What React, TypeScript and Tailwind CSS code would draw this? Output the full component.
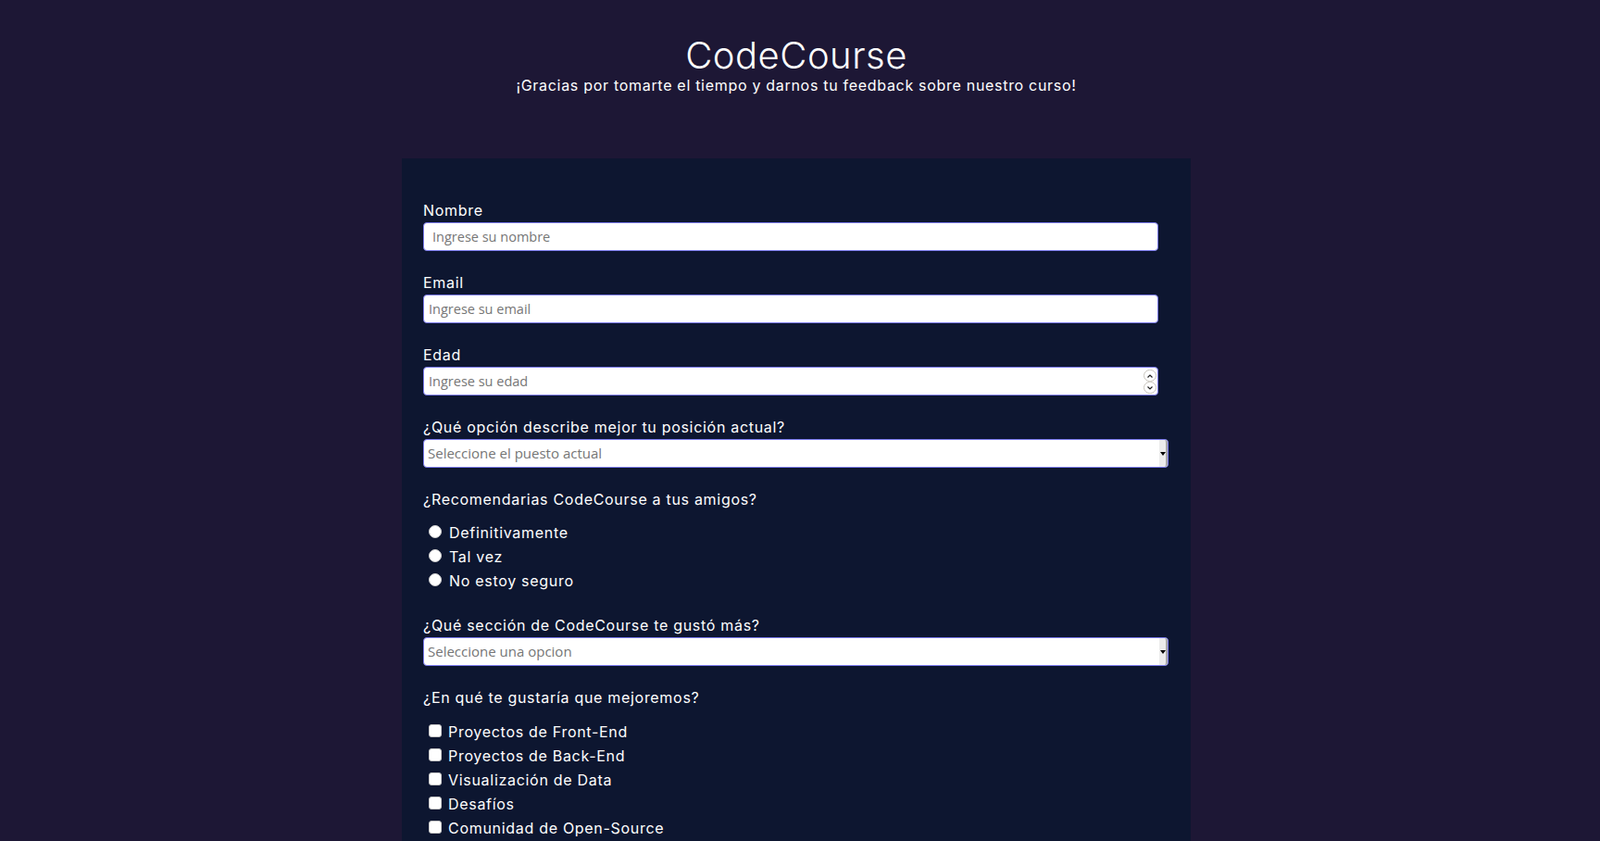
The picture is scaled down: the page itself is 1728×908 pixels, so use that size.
import { useState } from "react";

const font = { fontFamily: "Inter, 'Noto Sans', sans-serif" };

function SelectBox({ placeholder, options }: { placeholder: string; options: string[] }) {
  return (
    <div className="relative w-[805px] mt-[1px]">
      <select
        defaultValue=""
        className="block w-full h-[31px] appearance-none rounded-[4px] border border-[#7b7bee] bg-white pl-[4px] text-[15px] tracking-normal text-[#767676] outline-none"
        style={{ fontFamily: "'Open Sans', sans-serif" }}
      >
        <option value="" disabled>
          {placeholder}
        </option>
        {options.map((o) => (
          <option key={o}>{o}</option>
        ))}
      </select>
      {/* flecha del select */}
      <div className="pointer-events-none absolute right-[1px] top-[1px] bottom-[1px] w-[9px] rounded-r-[3px] border-r-2 border-[#a9a9a9] bg-[#ececec] flex items-center justify-center">
        <div className="w-0 h-0 border-l-[3px] border-r-[3px] border-t-[4px] border-l-transparent border-r-transparent border-t-black" />
      </div>
    </div>
  );
}

export default function App() {
  const [nombre, setNombre] = useState("");
  const [email, setEmail] = useState("");
  const [edad, setEdad] = useState("");

  const labelCls = "block text-[16px] leading-6 text-white";
  const inputCls =
    "block w-[794px] h-[31px] mt-[1px] rounded-[4px] border border-[#7b7bee] bg-white text-[14.5px] tracking-normal text-gray-800 placeholder:text-[#767676] outline-none";

  return (
    <div className="min-h-screen bg-[#1d1735] pb-10 pr-2" style={font}>
      <header className="pt-[38px] text-center text-white">
        <h1 className="text-[40px] leading-[44px] font-light tracking-[0.5px]">CodeCourse</h1>
        <p className="text-[16px] leading-5 tracking-[0.7px]">
          ¡Gracias por tomarte el tiempo y darnos tu feedback sobre nuestro curso!
        </p>
      </header>

      <div className="flex justify-center mt-[69px]">
        <form className="w-[852px] bg-[#0d1630] pt-[44px] pl-[23px] pb-12 tracking-[0.7px]">
          {/* Nombre */}
          <div className="mb-[22px]">
            <label className={labelCls}>Nombre</label>
            <input
              type="text"
              placeholder="Ingrese su nombre"
              value={nombre}
              onChange={(e) => setNombre(e.target.value)}
              className={inputCls + " pl-[9px]"}
              style={{ fontFamily: "'Open Sans', sans-serif" }}
            />
          </div>

          {/* Email */}
          <div className="mb-[22px]">
            <label className={labelCls}>Email</label>
            <input
              type="email"
              placeholder="Ingrese su email"
              value={email}
              onChange={(e) => setEmail(e.target.value)}
              className={inputCls + " pl-[5px]"}
              style={{ fontFamily: "'Open Sans', sans-serif" }}
            />
          </div>

          {/* Edad */}
          <div className="mb-[22px]">
            <label className={labelCls}>Edad</label>
            <div className="relative w-[794px]">
              <input
                type="number"
                placeholder="Ingrese su edad"
                value={edad}
                onChange={(e) => setEdad(e.target.value)}
                className={
                  inputCls +
                  " pl-[5px] [appearance:textfield] [&::-webkit-inner-spin-button]:appearance-none [&::-webkit-outer-spin-button]:appearance-none"
                }
                style={{ fontFamily: "'Open Sans', sans-serif" }}
              />
              <div className="pointer-events-none absolute right-[2px] top-[3px] flex flex-col">
                <div className="w-[14px] h-[13px] rounded-full border border-[#c8c4bc] bg-white flex items-center justify-center">
                  <svg width="6" height="4" viewBox="0 0 6 4">
                    <path d="M0.5 3.5 L3 1 L5.5 3.5" fill="none" stroke="#222" strokeWidth="1.2" />
                  </svg>
                </div>
                <div className="w-[14px] h-[13px] rounded-full border border-[#c8c4bc] bg-white flex items-center justify-center">
                  <svg width="6" height="4" viewBox="0 0 6 4">
                    <path d="M0.5 0.5 L3 3 L5.5 0.5" fill="none" stroke="#222" strokeWidth="1.2" />
                  </svg>
                </div>
              </div>
            </div>
          </div>

          {/* Posición */}
          <div className="mb-[22px]">
            <label className={labelCls}>¿Qué opción describe mejor tu posición actual?</label>
            <SelectBox
              placeholder="Seleccione el puesto actual"
              options={["Estudiante", "Trabajo a tiempo completo", "Busco trabajo", "Otro"]}
            />
          </div>

          {/* Recomendación */}
          <div className="mb-[23px]">
            <label className={labelCls}>¿Recomendarias CodeCourse a tus amigos?</label>
            <div className="mt-[11px] pl-[6px]">
              {["Definitivamente", "Tal vez", "No estoy seguro"].map((r) => (
                <label key={r} className="flex items-center h-[26px] text-[16px] text-white">
                  <input
                    type="radio"
                    name="recomendar"
                    className="appearance-none w-[14px] h-[14px] rounded-full bg-white border border-[#d0d0d0] -mt-[2px] mr-[8px]"
                  />
                  {r}
                </label>
              ))}
            </div>
          </div>

          {/* Sección */}
          <div className="mb-[22px]">
            <label className={labelCls}>¿Qué sección de CodeCourse te gustó más?</label>
            <SelectBox
              placeholder="Seleccione una opcion"
              options={["Desafíos", "Proyectos", "Comunidad", "Open-Source"]}
            />
          </div>

          {/* Mejoras */}
          <div className="mb-[23px]">
            <label className={labelCls}>¿En qué te gustaría que mejoremos?</label>
            <div className="mt-[12px] pl-[6px]">
              {[
                "Proyectos de Front-End",
                "Proyectos de Back-End",
                "Visualización de Data",
                "Desafíos",
                "Comunidad de Open-Source",
              ].map((c) => (
                <label key={c} className="flex items-center h-[26px] text-[16px] text-white">
                  <input
                    type="checkbox"
                    className="appearance-none w-[14px] h-[14px] rounded-[3px] bg-white border border-[#c8c8c8] -mt-[3px] mr-[7px]"
                  />
                  {c}
                </label>
              ))}
            </div>
          </div>

          {/* Comentarios */}
          <div className="mb-[23px]">
            <label className={labelCls}>¿Algún comentario o sugerencia?</label>
            <textarea
              placeholder="Ingrese su comentario..."
              className="block w-[794px] h-[120px] rounded-[4px] border border-[#7b7bee] bg-white p-[5px] text-[14px] tracking-normal outline-none"
              style={{ fontFamily: "'Open Sans', sans-serif" }}
            />
          </div>

          <button type="submit" className="w-[794px] h-[40px] rounded-[4px] bg-[#37af65] text-white text-[16px]">
            Enviar
          </button>
        </form>
      </div>
    </div>
  );
}
